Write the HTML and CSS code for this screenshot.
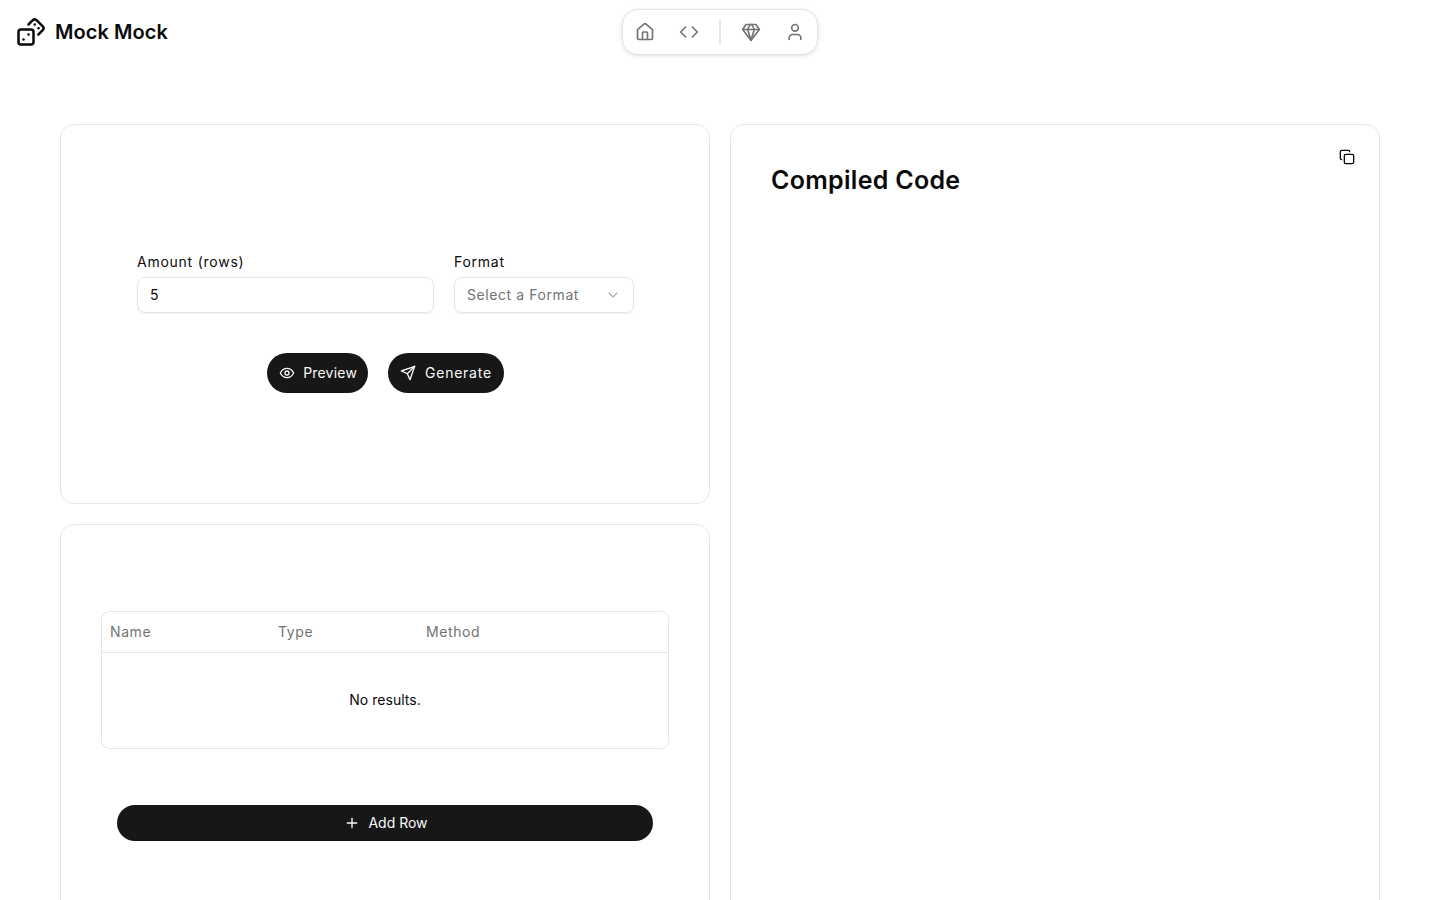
FILE: index.html
```html
<!DOCTYPE html>
<html lang="en">
<head>
<meta charset="utf-8">
<title>Mock Mock</title>
<link rel="stylesheet" href="styles.css">
</head>
<body>
<header class="topbar">
  <a class="brand" href="#">
    <svg class="brand-icon" viewBox="0 0 24 24"><rect width="12" height="12" x="2" y="10" rx="2" ry="2"/><path d="m17.92 14 3.5-3.5a2.24 2.24 0 0 0 0-3l-5-4.92a2.24 2.24 0 0 0-3 0L10 6"/><path d="M6 18h.01"/><path d="M10 14h.01"/><path d="M15 6h.01"/><path d="M18 9h.01"/></svg>
    <span class="brand-name">Mock Mock</span>
  </a>
  <nav class="dock">
    <a class="dock-item" href="#"><svg class="icon20" viewBox="0 0 24 24"><path d="M15 21v-8a1 1 0 0 0-1-1h-4a1 1 0 0 0-1 1v8"/><path d="M3 10a2 2 0 0 1 .709-1.528l7-5.999a2 2 0 0 1 2.582 0l7 5.999A2 2 0 0 1 21 10v9a2 2 0 0 1-2 2H5a2 2 0 0 1-2-2z"/></svg></a>
    <a class="dock-item" href="#"><svg class="icon20" viewBox="0 0 24 24"><path d="m16 18 6-6-6-6"/><path d="m8 6-6 6 6 6"/></svg></a>
    <span class="dock-sep"></span>
    <a class="dock-item" href="#"><svg class="icon20" viewBox="0 0 24 24"><path d="M6 3h12l4 6-10 13L2 9Z"/><path d="M11 3 8 9l4 13 4-13-3-6"/><path d="M2 9h20"/></svg></a>
    <a class="dock-item" href="#"><svg class="icon20" viewBox="0 0 24 24"><path d="M19 21v-2a4 4 0 0 0-4-4H9a4 4 0 0 0-4 4v2"/><circle cx="12" cy="7" r="4"/></svg></a>
  </nav>
</header>
<main class="layout">
  <div class="left-col">
    <section class="card form-card">
      <div class="fields">
        <div class="field field-amount">
          <label class="label">Amount (rows)</label>
          <div class="control control-text">5</div>
        </div>
        <div class="field field-format">
          <label class="label">Format</label>
          <div class="control control-select">
            <span class="placeholder">Select a Format</span>
            <svg class="chevron" viewBox="0 0 24 24"><path d="m6 9 6 6 6-6"/></svg>
          </div>
        </div>
      </div>
      <div class="actions">
        <button class="pill pill-preview"><svg class="icon16" viewBox="0 0 24 24"><path d="M2 12s3.5-7 10-7 10 7 10 7-3.5 7-10 7-10-7-10-7Z"/><circle cx="12" cy="12" r="3"/></svg><span>Preview</span></button>
        <button class="pill pill-generate"><svg class="icon16" viewBox="0 0 24 24"><path d="m22 2-7 20-4-9-9-4Z"/><path d="M22 2 11 13"/></svg><span>Generate</span></button>
      </div>
    </section>
    <section class="card table-card">
      <div class="table">
        <div class="table-head">
          <span class="col col-name">Name</span>
          <span class="col col-type">Type</span>
          <span class="col col-method">Method</span>
        </div>
        <div class="table-empty">No results.</div>
      </div>
      <button class="add-row"><svg class="icon16" viewBox="0 0 24 24"><path d="M5 12h14"/><path d="M12 5v14"/></svg><span>Add Row</span></button>
    </section>
  </div>
  <section class="card code-card">
    <h2 class="code-title">Compiled Code</h2>
    <button class="copy"><svg class="icon16 copy-icon" viewBox="0 0 24 24"><rect width="14" height="14" x="8" y="8" rx="2" ry="2"/><path d="M4 16c-1.1 0-2-.9-2-2V4c0-1.1.9-2 2-2h10c1.1 0 2 .9 2 2"/></svg></button>
  </section>
</main>
</body>
</html>
```
FILE: styles.css
```css
* { box-sizing: border-box; }
html, body { margin: 0; height: 100%; overflow: hidden; }
body { background: #fff; color: #0a0a0a; font-family: Inter, "Noto Sans", sans-serif; font-size: 14px; }
svg { fill: none; stroke: currentColor; stroke-width: 2; stroke-linecap: round; stroke-linejoin: round; display: block; flex: none; }
a { color: inherit; text-decoration: none; }
button { font: inherit; border: 0; cursor: pointer; }

.topbar { display: grid; grid-template-columns: 1fr auto 1fr; align-items: start; padding: 9px 0 0; height: 124px; }
.brand { display: flex; align-items: center; gap: 9px; padding-left: 16px; height: 46px; }
.brand-icon { width: 30px; height: 30px; color: #0a0a0a; }
.brand-name { font-size: 20px; font-weight: 600; letter-spacing: .05px; }
.dock { display: flex; align-items: center; height: 46px; border: 1px solid #e5e5e5; border-radius: 16px; background: #fff; box-shadow: 0 1px 4px rgba(0,0,0,.12); color: #737373; }
.dock-item { width: 44px; height: 42px; display: flex; align-items: center; justify-content: center; }
.icon20 { width: 20px; height: 20px; }
.icon16 { width: 16px; height: 16px; }
.dock-sep { width: 2px; height: 24px; margin: 0 8px; background: #e5e5e5; }

.layout { display: grid; grid-template-columns: 650px 650px; gap: 20px; padding: 0 60px; }
.left-col { display: flex; flex-direction: column; gap: 20px; }
.card { border: 1px solid #e5e5e5; border-radius: 14px; background: #fff; }
.form-card { height: 380px; padding: 127px 75px 0 76px; }
.fields { display: flex; gap: 20px; }
.field { display: flex; flex-direction: column; gap: 5px; }
.field-amount { width: 297px; }
.field-format { width: 180px; }
.label { line-height: 20px; letter-spacing: .75px; color: #0a0a0a; }
.control { height: 36px; border: 1px solid #e5e5e5; border-radius: 8px; box-shadow: 0 1px 2px rgba(0,0,0,.05); padding: 0 12px 2px 12px; display: flex; align-items: center; justify-content: space-between; letter-spacing: .4px; }
.placeholder { color: #737373; letter-spacing: .58px; white-space: nowrap; }
.chevron { width: 16px; height: 16px; stroke-width: 1.6; color: #737373; opacity: .6; margin-top: 2px; }
.actions { display: flex; justify-content: center; gap: 20px; margin-top: 40px; }
.pill { height: 40px; border-radius: 20px; background: #171717; color: #fafafa; display: flex; align-items: center; gap: 8px; padding: 0 12px 2px; white-space: nowrap; }
.pill svg { margin-top: 2px; }
.pill-preview { letter-spacing: .2px; padding-right: 11px; }
.pill-generate { letter-spacing: .75px; gap: 9px; }

.table-card { height: 403px; padding: 86px 40px 0; }
.table { border: 1px solid #e5e5e5; border-radius: 8px; }
.table-head { display: grid; grid-template-columns: 168px 148px 1fr; height: 41px; align-items: center; padding: 0 0 2px 8px; border-bottom: 1px solid #e5e5e5; color: #737373; letter-spacing: .6px; }
.table-empty { height: 95px; display: flex; align-items: center; justify-content: center; padding-bottom: 2px; letter-spacing: .04px; }
.add-row { width: 536px; height: 36px; margin: 56px 16px 0; border-radius: 18px; background: #171717; color: #fafafa; display: flex; align-items: center; justify-content: center; gap: 8px; padding: 0 0 2px 2px; letter-spacing: 0; }
.add-row svg { margin-top: 1px; }

.code-card { height: 803px; padding: 40px; position: relative; }
.code-title { margin: 0; font-size: 25px; line-height: 30px; font-weight: 600; letter-spacing: .3px; }
.copy { position: absolute; top: 24px; right: 24px; padding: 0; background: none; color: #0a0a0a; }
```
